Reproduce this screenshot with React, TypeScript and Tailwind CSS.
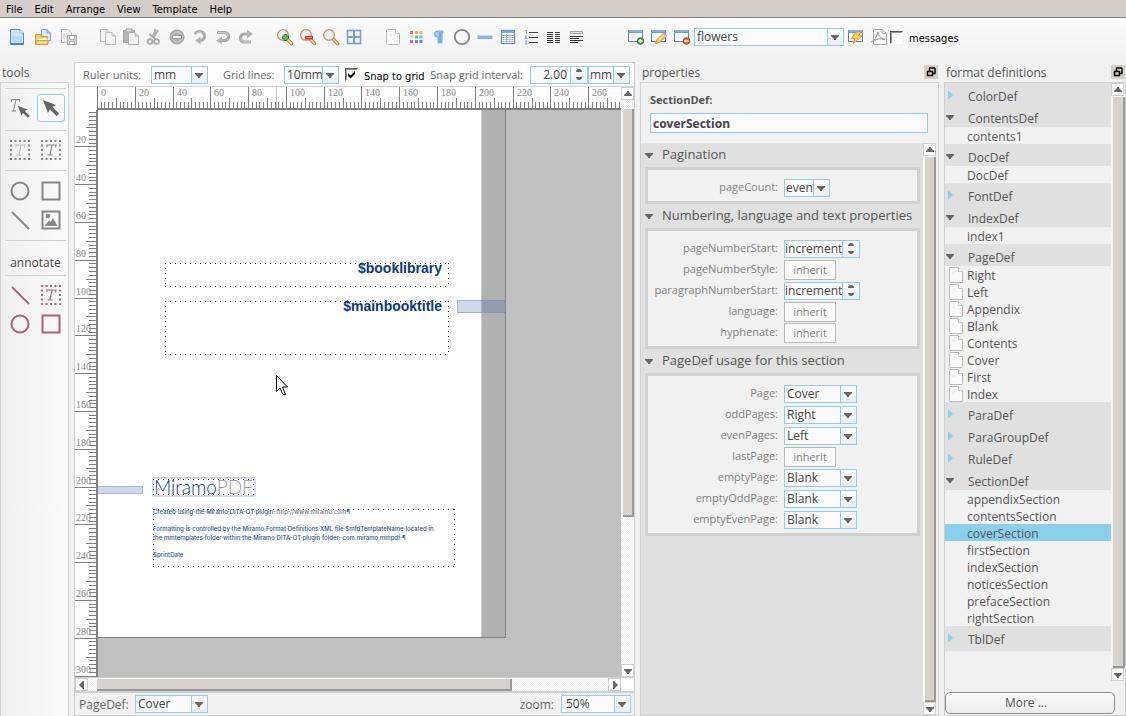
import React, { useId, useState } from "react";

const FONT = "font-['Open_Sans','Noto_Sans',sans-serif]";
const SYSTEM = "font-['DejaVu_Sans_Condensed','DejaVu_Sans',sans-serif]";
const DITHER =
  "bg-[repeating-conic-gradient(#ececec_0%_25%,#ffffff_0%_50%)] bg-[length:2px_2px]";

/* ---------- small shared drawings ---------- */

type TriProps = { dir: "up" | "down" | "left" | "right"; className?: string };

function Triangle({ dir, className = "text-[#666]" }: TriProps) {
  const paths = {
    down: "M0 2H8V3L5 6V7H3V6L0 3Z",
    up: "M0 6H8V5L5 2V1H3V2L0 5Z",
    right: "M2 0H3L7 4L3 8H2Z",
    left: "M6 0H5L1 4L5 8H6Z",
  };
  return (
    <svg width="8" height="8" viewBox="0 0 8 8" className={className} aria-hidden="true">
      <path d={paths[dir]} fill="currentColor" />
    </svg>
  );
}

function Icon({ children, size = 18 }: { children: React.ReactNode; size?: number }) {
  return (
    <svg width={size} height={size} viewBox={`0 0 ${size} ${size}`} fill="none" aria-hidden="true">
      {children}
    </svg>
  );
}

function Sheet({ x = 0, y = 0, stroke = "#b8b8b8" }: { x?: number; y?: number; stroke?: string }) {
  return (
    <g transform={`translate(${x} ${y})`}>
      <path d="M.5.5H7L10.5 4V12.5H.5Z" fill="#f4f4f4" stroke={stroke} />
      <path d="M7 .5V4H10.5" stroke={stroke} />
    </g>
  );
}

function PageIcon() {
  return (
    <svg width="14" height="16" viewBox="0 0 14 16" fill="none" aria-hidden="true">
      <path d="M1.5.5H9.5L13.5 4.5V14.5Q13.5 15.5 12.5 15.5H1.5Q.5 15.5 .5 14.5V1.5Q.5.5 1.5.5Z" fill="#fafafa" stroke="#b8b8b8" />
      <path d="M9.5.5V4.5H13.5" fill="#fff" stroke="#c8c8c8" />
      <path d="M3 5H6V8H3Z" fill="#f0f0f0" />
    </svg>
  );
}

function BrowserFrame() {
  return (
    <g>
      <rect x="1.5" y="2.5" width="14" height="11" fill="#f5f8fc" stroke="#5b80b5" />
      <path d="M1 2H16V5H1Z" fill="#6f9ddb" />
      <path d="M2 3H15" stroke="#9cc0ee" />
    </g>
  );
}

function Lens() {
  return (
    <g>
      <path d="M10.5 10.5L15.5 15.5" stroke="#b98145" strokeWidth="3.6" strokeLinecap="round" />
      <path d="M11.5 11.5L15.3 15.3" stroke="#f0c98e" strokeWidth="1.8" strokeLinecap="round" />
      <circle cx="7" cy="7" r="5.4" fill="#eeedf4" stroke="#c69a66" strokeWidth="1.4" />
    </g>
  );
}

const icons: Record<string, React.ReactNode> = {
  "New document": (
    <Icon>
      <path d="M2.5 1.5H12L15.5 5V16.5H2.5Z" fill="#cfe4fb" stroke="#4a8ad8" />
      <path d="M12 1.5V5H15.5" fill="#fff" stroke="#7fb0ea" />
      <path d="M4 9H14M4 11H14M4 13H14" stroke="#a8cdf5" />
      <path d="M3 16H15" stroke="#3f83d6" strokeWidth="2" />
    </Icon>
  ),
  Open: (
    <Icon>
      <path d="M7.5 1.5H13L16.5 5V12.5H7.5Z" fill="#d8e9fc" stroke="#6a9fe0" />
      <path d="M13 1.5V5H16.5" stroke="#6a9fe0" />
      <path d="M1.5 16.5V6.5H6.5L7.5 8.5H13.5V16.5Z" fill="#f6c65a" stroke="#d99a2b" />
      <path d="M3.5 10.5H13.5V14H3.5Z" fill="#fff" />
      <path d="M1.5 16.5L3 12.5H14.5L13.5 16.5Z" fill="#fbd878" stroke="#d99a2b" />
    </Icon>
  ),
  "Save copy": (
    <Icon>
      <path d="M1.5 1.5H8L11.5 5V14.5H1.5Z" fill="#f4f4f4" stroke="#b4b4b4" />
      <path d="M3 6H8M3 8H7M3 10H7" stroke="#cfcfcf" />
      <rect x="7.5" y="7.5" width="9" height="9" fill="#dadada" stroke="#a8a8a8" />
      <path d="M9.5 8V11.5H14.5V8M9.5 16V13.5H14.5V16" fill="#fff" stroke="#a8a8a8" />
    </Icon>
  ),
  Copy: (
    <Icon>
      <Sheet x={1} y={1} />
      <Sheet x={6} y={4} />
    </Icon>
  ),
  Paste: (
    <Icon>
      <path d="M1.5 2.5H12.5V14.5H1.5Z" fill="#b5b5b5" stroke="#a5a5a5" />
      <path d="M4 1H10V4H4Z" fill="#dedede" stroke="#a5a5a5" />
      <Sheet x={6} y={4} stroke="#acacac" />
    </Icon>
  ),
  Cut: (
    <Icon>
      <path d="M10.5 1L7.5 10M4.5 6L10 11M13 2L9 9" stroke="#b0b0b0" strokeWidth="2" />
      <circle cx="5" cy="13.5" r="2.4" stroke="#a8a8a8" strokeWidth="1.8" />
      <circle cx="11.5" cy="13.5" r="2.4" stroke="#a8a8a8" strokeWidth="1.8" />
    </Icon>
  ),
  Delete: (
    <Icon>
      <circle cx="9" cy="9" r="7" fill="#b2b2b2" stroke="#a0a0a0" />
      <circle cx="9" cy="9" r="5" stroke="#cfcfcf" />
      <rect x="4.5" y="7.5" width="9" height="3" fill="#f8f8f8" stroke="#9a9a9a" />
    </Icon>
  ),
  Refresh: (
    <Icon>
      <path d="M4 6Q6 3 9.5 3.5Q14 4.5 13.5 9Q12.5 13 8 12.5" stroke="#aaa" strokeWidth="3" />
      <path d="M9.5 8.5V16.5L4 12.5Z" fill="#b4b4b4" />
      <path d="M5 5.5Q8 3 11 5" stroke="#d4d4d4" />
    </Icon>
  ),
  Undo: (
    <Icon>
      <path d="M3 4.5H11Q14.5 5 14.5 8.5Q14.5 12 11 12.5H7" stroke="#aaa" strokeWidth="3" />
      <path d="M8 8.5V16.5L2 12.5Z" fill="#b4b4b4" />
      <path d="M4 4.5H11Q14 5 14 8" stroke="#d0d0d0" />
    </Icon>
  ),
  Redo: (
    <Icon>
      <path d="M14 14H7Q3.5 13.5 3.5 10Q3.5 6.5 7 6H10" stroke="#aaa" strokeWidth="3" />
      <path d="M10 1.5V10.5L16 6Z" fill="#b4b4b4" />
      <path d="M13 14H7Q4 13.5 4 10.5" stroke="#d0d0d0" />
    </Icon>
  ),
  "Zoom in": (
    <Icon>
      <Lens />
      <path d="M9.5 6V13M6 9.5H13" stroke="#2f8a3a" strokeWidth="3.4" />
      <path d="M9.5 7V12M7 9.5H12" stroke="#6cc474" strokeWidth="1.4" />
    </Icon>
  ),
  "Zoom out": (
    <Icon>
      <Lens />
      <rect x="6" y="8" width="8" height="3.4" fill="#dd2b2b" />
      <path d="M7 9.5H13" stroke="#f58a8a" />
    </Icon>
  ),
  "Zoom to fit": (
    <Icon>
      <Lens />
    </Icon>
  ),
  "Toggle grid": (
    <Icon>
      <rect x="2.5" y="2.5" width="13" height="13" fill="#eef3fb" stroke="#7d9ccf" strokeWidth="1.6" />
      <path d="M9 2V16M2 9H16" stroke="#7d9ccf" strokeWidth="2" />
    </Icon>
  ),
  "Page format": <PageIcon />,
  Colors: (
    <Icon>
      <path d="M3 3H6V6H3Z" fill="#f0706a" />
      <path d="M8 3H11V6H8Z" fill="#f4a460" />
      <path d="M12.5 3H15.5V6H12.5Z" fill="#e3c34e" />
      <path d="M3 7.5H6V10.5H3Z" fill="#c9e2a4" />
      <path d="M8 7.5H11V10.5H8Z" fill="#59c878" />
      <path d="M12.5 7.5H15.5V10.5H12.5Z" fill="#5fc0ec" />
      <path d="M3 12H6V15H3Z" fill="#c45ec9" />
      <path d="M8 12H11V15H8Z" fill="#8a78e0" />
      <path d="M12.5 12H15.5V15H12.5Z" fill="#4f86e0" />
    </Icon>
  ),
  Paragraph: (
    <Icon>
      <path d="M8 9.5Q4.5 9 4.5 6Q4.5 3 8 3H13V4.5H12V15H10.5V4.5H9.5V15H8Z" fill="#9cc6f6" stroke="#6fa6ea" />
    </Icon>
  ),
  Ellipse: (
    <Icon>
      <circle cx="9" cy="9" r="7.2" stroke="#868686" strokeWidth="1.8" />
    </Icon>
  ),
  Rule: (
    <Icon>
      <rect x="2" y="8" width="14" height="2.5" fill="#8fb8ee" stroke="#6a9fe0" strokeWidth=".7" />
    </Icon>
  ),
  Table: (
    <Icon>
      <rect x="2.5" y="2.5" width="13" height="13" fill="#fff" stroke="#5f90cf" strokeWidth="1.2" />
      <path d="M3 3H15V5H3Z" fill="#7fa9e0" />
      <path d="M4 7.5H14" stroke="#8cc58c" />
      <path d="M4 9.5H14M4 11.5H14M4 13.5H14M7.5 6.5V14.5M11 6.5V14.5" stroke="#a9c2e2" />
    </Icon>
  ),
  "Numbered list": (
    <Icon>
      <path d="M7 4.5H16M7 9.5H16M7 14.5H16" stroke="#444" />
      <path d="M3 2.5H4.5V6M3 8H5L3 10.5H5.5M3 13H5L4 14.5L5 16H3" stroke="#7fa5dc" />
    </Icon>
  ),
  "Two columns": (
    <Icon>
      <path d="M2 4.5H8M2 6.5H8M2 8.5H8M2 10.5H8M2 12.5H8M2 14.5H8M10 4.5H15M10 6.5H15M10 8.5H15M10 10.5H15M10 12.5H15M10 14.5H15" stroke="#333" />
    </Icon>
  ),
  "Text lines": (
    <Icon>
      <rect x="2.5" y="3.5" width="12" height="2" fill="#ddd" stroke="#aaa" />
      <path d="M2 8.5H15M2 10.5H11M2 12.5H15M2 14.5H10" stroke="#333" />
    </Icon>
  ),
  "Add definition": (
    <Icon>
      <BrowserFrame />
      <circle cx="13.5" cy="13" r="3.3" fill="#5da53c" stroke="#357a1c" />
      <path d="M13.5 11V15M11.5 13H15.5" stroke="#fff" strokeWidth="1.4" />
    </Icon>
  ),
  "Edit definition": (
    <Icon>
      <BrowserFrame />
      <path d="M5.5 15.5L7 11.5L13.5 5L16.5 8L9.5 14.5Z" fill="#f6c95c" stroke="#cf8f2a" />
      <path d="M13.5 5L16.5 8L15 9.5L12 6.5Z" fill="#f3b09a" />
      <path d="M8 12.5L14 7" stroke="#fdeab0" />
    </Icon>
  ),
  "Remove definition": (
    <Icon>
      <BrowserFrame />
      <circle cx="13.5" cy="13" r="3.3" fill="#e2662a" stroke="#b8400f" />
      <path d="M11.5 13H15.5" stroke="#fff" strokeWidth="1.6" />
    </Icon>
  ),
  "Run definition": (
    <Icon>
      <BrowserFrame />
      <path d="M9 4H14L11.5 8H15L6 15.5L8 10.5H4.5Z" fill="#f8cf57" stroke="#d99b2b" />
    </Icon>
  ),
  "Create PDF": (
    <Icon>
      <path d="M3.5 1.5H12L16.5 5.5V16.5H3.5Z" fill="#f8f8f8" stroke="#a5a5a5" />
      <path d="M12 1.5V5.5H16.5" stroke="#b5b5b5" />
      <path d="M1 14Q6 12 7.5 5Q8 3 8.5 5Q9 10 15 11.5Q9 9.5 3.5 12.5" stroke="#999" />
    </Icon>
  ),
};

function ToolButton({ name, wide = false }: { name: string; wide?: boolean }) {
  return (
    <button type="button" aria-label={name} className={`flex h-6 shrink-0 items-center justify-center ${wide ? "w-[26px]" : "w-[23px]"}`}>
      {icons[name]}
    </button>
  );
}

/* ---------- form controls ---------- */

type ComboProps = { label: string; id?: string; value: string; width: string; pad?: string; options?: string[] };

function Combo({ label, id, value, width, pad = "pl-[2px]", options = [] }: ComboProps) {
  return (
    <span className={`flex h-[18px] shrink-0 border border-[#8bd0ea] bg-[#fafafa] ${width}`}>
      <select id={id} aria-label={label} defaultValue={value} className={`min-w-0 flex-1 appearance-none bg-transparent text-xs leading-4 text-[#444] outline-none ${pad}`}>
        {[value, ...options].map((o) => (
          <option key={o}>{o}</option>
        ))}
      </select>
      <span className="pointer-events-none flex w-4 shrink-0 items-center justify-center border-l border-[#8bd0ea] bg-gradient-to-b from-white to-[#ececec] pr-px">
        <Triangle dir="down" />
      </span>
    </span>
  );
}

type SpinProps = { label: string; id?: string; value: string; width: string; align?: string };

function Spin({ label, id, value, width, align = "text-left" }: SpinProps) {
  return (
    <span className={`flex h-[18px] shrink-0 border border-[#8bd0ea] bg-[#fafafa] ${width}`}>
      <input id={id} aria-label={label} defaultValue={value} className={`min-w-0 flex-1 border-r border-[#8bd0ea] bg-transparent text-xs leading-4 text-[#444] outline-none ${align}`} />
      <span className="flex w-4 shrink-0 items-center justify-center bg-gradient-to-b from-white to-[#ececec]">
        <svg width="6" height="13" viewBox="0 0 6 13" aria-hidden="true">
          <path d="M0 4V3L2 1H4L6 3V4ZM0 9V10L2 12H4L6 10V9Z" fill="#666" />
        </svg>
      </span>
    </span>
  );
}

function TickBox({ label, checked }: { label: string; checked: boolean }) {
  const [on, setOn] = useState(checked);
  return (
    <label className={`flex items-center gap-[6px] text-[11px] leading-4 text-black ${SYSTEM}`}>
      <span className="grid size-[13px] shrink-0 place-items-center border border-b-white border-l-[#555] border-r-white border-t-[#555] bg-white shadow-[inset_1px_1px_0_#999]">
        <input type="checkbox" checked={on} onChange={() => setOn(!on)} className="col-start-1 row-start-1 size-[11px] appearance-none" />
        {on && (
          <svg width="9" height="9" viewBox="0 0 9 9" className="pointer-events-none col-start-1 row-start-1" aria-hidden="true">
            <path d="M1 3L3.5 5.5L8 1V4L3.5 8.5L1 6Z" fill="#000" />
          </svg>
        )}
      </span>
      <span className="pt-1">{label}</span>
    </label>
  );
}

function ScrollButton({ dir }: { dir: TriProps["dir"] }) {
  return (
    <button type="button" aria-label={`Scroll ${dir}`} className="flex size-[13px] shrink-0 items-center justify-center border border-[#cfcfcf] bg-white">
      <Triangle dir={dir} />
    </button>
  );
}

/* ---------- top bars ---------- */

function MenuBar() {
  return (
    <nav className={`flex h-[18px] shrink-0 items-center border-b border-[#808080] bg-[#d4cec8] pt-[2px] text-[11px] leading-4 text-black ${SYSTEM}`}>
      {["File", "Edit", "Arrange", "View", "Template", "Help"].map((m) => (
        <button key={m} type="button" className="px-[6px]">
          {m}
        </button>
      ))}
    </nav>
  );
}

function Toolbar() {
  return (
    <div className="flex h-11 shrink-0 items-center bg-gradient-to-b from-[#fcfcfc] to-[#f0f0f0] pb-[6px] pl-1" role="toolbar">
      <div className="flex">
        {["New document", "Open", "Save copy"].map((n) => (
          <ToolButton key={n} name={n} wide />
        ))}
      </div>
      <div className="ml-[14px] flex">
        {["Copy", "Paste", "Cut", "Delete", "Refresh", "Undo", "Redo"].map((n) => (
          <ToolButton key={n} name={n} />
        ))}
      </div>
      <div className="ml-4 flex">
        {["Zoom in", "Zoom out", "Zoom to fit", "Toggle grid"].map((n) => (
          <ToolButton key={n} name={n} />
        ))}
      </div>
      <div className="ml-4 flex">
        {["Page format", "Colors", "Paragraph", "Ellipse", "Rule", "Table", "Numbered list", "Two columns", "Text lines"].map((n) => (
          <ToolButton key={n} name={n} />
        ))}
      </div>
      <div className="ml-9 flex items-center">
        {["Add definition", "Edit definition", "Remove definition"].map((n) => (
          <ToolButton key={n} name={n} />
        ))}
        <span className="ml-px flex">
          <Combo label="Template name" value="flowers" width="w-[150px]" />
        </span>
        <ToolButton name="Run definition" />
        <ToolButton name="Create PDF" />
        <TickBox label="messages" checked={false} />
      </div>
    </div>
  );
}

/* ---------- tools panel ---------- */

const GREY = "#868686";
const ROSE = "#a8637a";

function FrameT({ color, letter }: { color: string; letter: string }) {
  return (
    <Icon size={20}>
      <path d="M0 1H20M0 19H20" stroke={color} strokeWidth="2" strokeDasharray="2 2.5" />
      <path d="M1 4.5V18M19 4.5V18" stroke={color} strokeWidth="2" strokeDasharray="2 2.5" />
      <path d="M6 7V5H15L14.5 7.5M11 5L9 15M6.5 15H11.5" stroke={letter} strokeWidth="1.2" />
    </Icon>
  );
}

function Arrow() {
  return <path d="M1 1L14 6L10.5 8L17 14.5L14.5 17L8 10.5L6 14Z" fill="#666" />;
}

function Tool({ name, active = false, children }: { name: string; active?: boolean; children: React.ReactNode }) {
  return (
    <button type="button" aria-label={name} aria-pressed={active} className={`flex size-[28px] items-center justify-center rounded-[3px] border ${active ? "border-[#8bd0ea] bg-[#f8f8f8]" : "border-transparent"}`}>
      {children}
    </button>
  );
}

function ToolsPanel() {
  const pair = "flex gap-[3px] px-[1px]";
  const line = (c: string) => (
    <Icon size={20}>
      <path d="M2 2L19 19" stroke={c} strokeWidth="2" />
    </Icon>
  );
  const circle = (c: string) => (
    <Icon size={20}>
      <circle cx="10" cy="10" r="8.5" stroke={c} strokeWidth="2" />
    </Icon>
  );
  const square = (c: string) => (
    <Icon size={20}>
      <rect x="1.5" y="1.5" width="17" height="17" stroke={c} strokeWidth="2" />
    </Icon>
  );
  return (
    <aside className="flex w-[69px] shrink-0 flex-col">
      <h2 className="h-5 pl-[2px] text-xs leading-[22px] text-[#555]">tools</h2>
      <div className="flex flex-1 flex-col border border-b-0 border-[#cfcfcf] bg-gradient-to-r from-[#f0f0f0] to-[#fafafa] pl-1 pr-[2px] pt-[5px]">
        <div className="border-t border-[#cfcfcf] pb-[8px] pt-[5px]">
          <div className={pair}>
            <Tool name="Text select">
              <Icon size={20}>
                <path d="M1.5 4V1.5H10L9.5 4M6 1.5L3.5 13M1.5 13H6" stroke="#868686" />
                <g transform="translate(7 7) scale(.75)">
                  <Arrow />
                </g>
              </Icon>
            </Tool>
            <Tool name="Select" active>
              <Icon>
                <Arrow />
              </Icon>
            </Tool>
          </div>
        </div>
        <div className="border-t border-[#cfcfcf] pb-[6px] pt-[5px]">
          <div className={pair}>
            <Tool name="Flow frame">
              <FrameT color={GREY} letter="#c4c4c4" />
            </Tool>
            <Tool name="Text frame">
              <FrameT color={GREY} letter={GREY} />
            </Tool>
          </div>
        </div>
        <div className="border-t border-[#cfcfcf] py-[6px]">
          <div className={pair}>
            <Tool name="Draw ellipse">{circle(GREY)}</Tool>
            <Tool name="Draw rectangle">{square(GREY)}</Tool>
          </div>
          <div className={`mt-px ${pair}`}>
            <Tool name="Draw line">{line(GREY)}</Tool>
            <Tool name="Place image">
              <Icon size={20}>
                <rect x="1.5" y="1.5" width="17" height="17" stroke={GREY} strokeWidth="2" />
                <circle cx="7" cy="6" r="2.3" fill={GREY} />
                <path d="M3.5 16L8 10.5L9.5 12L12 8L16.5 16Z" fill={GREY} />
              </Icon>
            </Tool>
          </div>
        </div>
        <div className="border-t border-[#cfcfcf] pb-[3px] pt-[13px] text-center text-xs leading-[18px] text-[#444]">annotate</div>
        <div className="border-t border-[#cfcfcf] py-[5px]">
          <div className={pair}>
            <Tool name="Annotate line">{line(ROSE)}</Tool>
            <Tool name="Annotate text">
              <FrameT color={ROSE} letter={ROSE} />
            </Tool>
          </div>
          <div className={`mt-px ${pair}`}>
            <Tool name="Annotate ellipse">{circle(ROSE)}</Tool>
            <Tool name="Annotate rectangle">{square(ROSE)}</Tool>
          </div>
        </div>
      </div>
    </aside>
  );
}

/* ---------- rulers and canvas ---------- */

const STEP = 3.78;
const rulerText = "fill-[#888] font-['Liberation_Serif',serif] text-[10px]";

function HorizontalRuler() {
  const ticks = Array.from({ length: 145 }, (_, i) => i);
  return (
    <svg className="h-[23px] w-full bg-white" aria-hidden="true">
      {ticks.map((i) => {
        const x = Math.floor(22.4 + i * STEP);
        const top = i % 10 === 0 ? 0 : i % 5 === 0 ? 11 : 15;
        return <rect key={i} x={x} y={top} width="1" height={22 - top} fill="#808080" />;
      })}
      <rect x="201" y="0" width="1" height="21" fill="#c4c4c4" />
      {ticks
        .filter((i) => i % 10 === 0 && i <= 130)
        .map((i) => (
          <text key={i} x={Math.floor(22.4 + i * STEP) + 4} y="9" className={rulerText}>
            {i * 2}
          </text>
        ))}
      <rect x="22" y="21" width="100%" height="2" fill="#808080" />
    </svg>
  );
}

function VerticalRuler() {
  const ticks = Array.from({ length: 150 }, (_, i) => i + 1);
  return (
    <svg className="h-full w-[23px] shrink-0 bg-white" aria-hidden="true">
      {ticks.map((i) => {
        const y = Math.floor(i * STEP) - 1;
        const left = i % 10 === 0 ? 0 : i % 5 === 0 ? 11 : 14;
        return <rect key={i} x={left} y={y} width={22 - left} height="1" fill="#808080" />;
      })}
      {ticks
        .filter((i) => i % 10 === 0)
        .map((i) => (
          <text key={i} x="1" y={Math.floor(i * STEP) - 4} className={rulerText}>
            {i * 2}
          </text>
        ))}
      <rect x="21" y="0" width="2" height="100%" fill="#808080" />
    </svg>
  );
}

function DottedFrame({ className }: { className: string }) {
  return (
    <svg className={`absolute ${className}`} aria-hidden="true">
      <path d="M0 .5H2000" stroke="#000" strokeDasharray="1 4" />
      <path d="M.5 0V2000" stroke="#000" strokeDasharray="1 4" />
      <g transform="translate(0 -1)">
        <svg y="100%" overflow="visible">
          <path d="M0 .5H2000" stroke="#000" strokeDasharray="1 4" />
        </svg>
      </g>
      <g transform="translate(-1 0)">
        <svg x="100%" overflow="visible">
          <path d="M.5 0V2000" stroke="#000" strokeDasharray="1 4" />
        </svg>
      </g>
    </svg>
  );
}

function Canvas() {
  return (
    <div className="relative min-w-0 flex-1 overflow-hidden bg-[#c0c0c0]">
      <div className="absolute left-0 top-0 h-[528px] w-[408px] border-b border-r border-[#808080] bg-white">
        <div className="absolute right-0 top-0 h-full w-[24px] border-l border-[#ccc] bg-[#b1b1b1]" />

        <DottedFrame className="left-[67px] top-[153px] h-[24px] w-[284px]" />
        <div className="absolute right-[63px] top-[149px] font-['Liberation_Sans',sans-serif] text-[14px] font-bold leading-[18px] text-[#0a3a82]">$booklibrary</div>

        <DottedFrame className="left-[67px] top-[191px] h-[54px] w-[284px]" />
        <div className="absolute right-[63px] top-[187px] font-['Liberation_Sans',sans-serif] text-[14px] font-bold leading-[18px] text-[#0a3a82]">$mainbooktitle</div>

        <div className="absolute left-[359px] top-[190px] h-[13px] w-[48px] border border-r-0 border-[#6f8fc0]/50 bg-[#3c62a4]/25" />
        <div className="absolute left-0 top-[376px] h-[8px] w-[45px] border border-l-0 border-[#6f8fc0]/40 bg-[#3c62a4]/25" />

        <div className="absolute left-[54px] top-[367px] h-[20px] w-[104px] rounded-[2px] border-2 border-[#d5d8e2] bg-white font-['Lato',sans-serif] text-[19px] font-light leading-4">
          <span className="text-[#0a3a82]">Miramo</span>
          <span className="text-[#999]">PDF</span>
        </div>
        <DottedFrame className="left-[55px] top-[369px] h-[16px] w-[101px]" />

        <DottedFrame className="left-[55px] top-[399px] h-[58px] w-[302px]" />
        <div className="absolute left-[55px] top-[397px] whitespace-nowrap font-['Inter','Liberation_Sans',sans-serif] text-[6px] font-medium leading-[9px] text-[#2a5596]">
          <p>
            Created·using·the·Miramo·DITA-OT·plugin:·<span className="text-[#777]">http://www.miramo.com</span>¶
          </p>
          <p className="mt-2">
            Formatting·is·controlled·by·the·Miramo·Format·Definitions·XML·file·$mfdTemplateName·located·in
            <br />
            the·mmtemplates·folder·within·the·Miramo·DITA-OT·plugin·folder:·com.miramo.mmpdf·¶
          </p>
          <p className="mt-2">$printDate</p>
        </div>
      </div>

      <svg width="13" height="21" viewBox="0 0 13 21" className="absolute left-[178px] top-[265px]" aria-hidden="true">
        <path d="M.5.5V16.5L4 13L7 19.5H9.5L6.5 12H11.5Z" fill="#fff" stroke="#000" />
      </svg>
    </div>
  );
}

function Editor() {
  const label = "shrink-0 pt-px text-[#666]";
  return (
    <main className="flex min-w-0 flex-1 flex-col border border-[#cfcfcf]">
      <div className="flex h-6 shrink-0 items-center border-b border-[#cfcfcf] bg-white pl-2 pr-1 text-[11px]">
        <label htmlFor="ruler-units" className={`w-[68px] ${label}`}>
          Ruler units:
        </label>
        <Combo id="ruler-units" label="Ruler units" value="mm" width="w-[57px]" options={["pt", "in"]} />
        <label htmlFor="grid-lines" className={`ml-[15px] w-[61px] ${label}`}>
          Grid lines:
        </label>
        <Combo id="grid-lines" label="Grid lines" value="10mm" width="w-[55px]" options={["5mm"]} />
        <span className="ml-[6px] shrink-0">
          <TickBox label="Snap to grid" checked />
        </span>
        <span className="flex-1" />
        <label htmlFor="snap-interval" className={`mr-[7px] ${label}`}>
          Snap grid interval:
        </label>
        <Spin id="snap-interval" label="Snap grid interval" value="2.00" width="w-[58px]" align="pr-[3px] text-right" />
        <Combo label="Snap grid unit" value="mm" width="w-[42px]" pad="pl-px" />
      </div>

      <div className="flex min-h-0 flex-1">
        <div className="flex min-w-0 flex-1 flex-col">
          <div className="flex shrink-0">
            <HorizontalRuler />
          </div>
          <div className="flex min-h-0 flex-1">
            <VerticalRuler />
            <Canvas />
          </div>
        </div>
        <div className={`flex w-[13px] shrink-0 flex-col ${DITHER}`}>
          <ScrollButton dir="up" />
          <div className="ml-[2px] mt-[9px] h-[408px] border-b-2 border-r-2 border-[#999] bg-[#d6d2cd]" />
          <div className="flex-1" />
          <ScrollButton dir="down" />
        </div>
      </div>

      <div className="flex h-[14px] shrink-0 border-t border-[#cfcfcf]">
        <div className={`flex min-w-0 flex-1 ${DITHER}`}>
          <ScrollButton dir="left" />
          <div className="ml-[9px] mt-px w-[415px] shrink border-b-2 border-r-2 border-[#999] bg-[#d6d2cd]" />
          <div className="flex-1" />
          <ScrollButton dir="right" />
        </div>
        <div className="w-[13px] shrink-0 bg-white" />
      </div>

      <div className="flex h-[24px] shrink-0 items-center border-t-2 border-[#cfcfcf] pl-1 pr-[3px] text-xs">
        <label htmlFor="page-def" className={`w-[56px] ${label}`}>
          PageDef:
        </label>
        <Combo id="page-def" label="PageDef" value="Cover" width="w-[73px]" />
        <span className="flex-1" />
        <label htmlFor="zoom" className={`mr-[7px] ${label}`}>
          zoom:
        </label>
        <Combo id="zoom" label="zoom" value="50%" width="w-[70px]" pad="pl-1" />
      </div>
    </main>
  );
}

/* ---------- docked panels ---------- */

function DockTitle({ children }: { children: string }) {
  return (
    <div className="flex h-5 shrink-0 items-center justify-between pl-[2px]">
      <h2 className="pt-[2px] text-xs text-[#555]">{children}</h2>
      <button type="button" aria-label={`Undock ${children}`} className="mb-px mr-px flex size-[14px] items-center justify-center bg-[#d4cec8]">
        <svg width="10" height="10" viewBox="0 0 10 10" fill="none" aria-hidden="true">
          <path d="M3 1H9M3.5 1V4M9 1V6.5M7 6.5H9.5" stroke="#000" strokeWidth="1.4" />
          <path d="M1 4.5H7M1.5 4V9M1 8.5H7M6.5 4V9" stroke="#000" strokeWidth="1.4" />
        </svg>
      </button>
    </div>
  );
}

type Field = { name: string; kind: "combo" | "spin" | "inherit"; value?: string; width?: string };

const sections: { title: string; fields: Field[] }[] = [
  { title: "Pagination", fields: [{ name: "pageCount", kind: "combo", value: "even", width: "w-[46px]" }] },
  {
    title: "Numbering, language and text properties",
    fields: [
      { name: "pageNumberStart", kind: "spin", value: "increment" },
      { name: "pageNumberStyle", kind: "inherit" },
      { name: "paragraphNumberStart", kind: "spin", value: "increment" },
      { name: "language", kind: "inherit" },
      { name: "hyphenate", kind: "inherit" },
    ],
  },
  {
    title: "PageDef usage for this section",
    fields: [
      { name: "Page", kind: "combo", value: "Cover", width: "w-[73px]" },
      { name: "oddPages", kind: "combo", value: "Right", width: "w-[73px]" },
      { name: "evenPages", kind: "combo", value: "Left", width: "w-[73px]" },
      { name: "lastPage", kind: "inherit" },
      { name: "emptyPage", kind: "combo", value: "Blank", width: "w-[73px]" },
      { name: "emptyOddPage", kind: "combo", value: "Blank", width: "w-[73px]" },
      { name: "emptyEvenPage", kind: "combo", value: "Blank", width: "w-[73px]" },
    ],
  },
];

function FieldRow({ field }: { field: Field }) {
  const id = useId();
  return (
    <div className="flex h-[21px] items-center gap-[6px]">
      <label htmlFor={id} className="w-[130px] shrink-0 text-right text-[11px] text-[#808080]">
        {field.name}:
      </label>
      {field.kind === "combo" && <Combo id={id} label={field.name} value={field.value ?? ""} width={field.width ?? ""} pad={field.width === "w-[46px]" ? "pl-px" : "pl-[2px]"} />}
      {field.kind === "spin" && <Spin id={id} label={field.name} value={field.value ?? ""} width="w-[76px]" />}
      {field.kind === "inherit" && (
        <button id={id} type="button" className="h-5 w-[52px] border border-[#b8b8b8] bg-[#fafafa] text-[11px] leading-4 text-[#808080]">
          inherit
        </button>
      )}
    </div>
  );
}

function PropertiesPanel() {
  return (
    <section className="flex w-[299px] shrink-0 flex-col">
      <DockTitle>properties</DockTitle>
      <div className="flex min-h-0 flex-1 flex-col border border-[#cfcfcf]">
        <div className="flex flex-col px-[9px] pb-[10px] pt-[8px]">
          <label htmlFor="section-def" className="h-[22px] text-[11px] font-bold leading-[18px] text-[#555]">
            SectionDef:
          </label>
          <input id="section-def" defaultValue="coverSection" className="mr-px h-[20px] border border-[#8bd0ea] bg-[#fafafa] px-[2px] text-xs font-bold text-[#444] outline-none" />
        </div>
        <div className="flex min-h-0 flex-1 bg-[#e0e0e0]">
          <div className="min-w-0 flex-1 pl-[4px] pr-[3px]">
            {sections.map((s) => (
              <div key={s.title}>
                <button type="button" aria-expanded="true" className="flex h-6 w-full items-center gap-[9px] text-left text-[13px] text-[#555]">
                  <Triangle dir="down" />
                  {s.title}
                </button>
                <div className="border-[3px] border-[#d0d0d0] bg-[#f1f1f1] pb-[3px] pt-[7px]">
                  {s.fields.map((f) => (
                    <FieldRow key={f.name} field={f} />
                  ))}
                </div>
              </div>
            ))}
          </div>
          <div className="flex w-[13px] shrink-0 flex-col bg-[#f6f6f6]">
            <ScrollButton dir="up" />
            <div className="ml-[2px] mt-px flex-1 border-b-2 border-r-2 border-[#999] bg-[#d6d2cd]" />
            <ScrollButton dir="down" />
          </div>
          <div className="w-[2px] shrink-0 bg-[#f1f1f1]" />
        </div>
      </div>
    </section>
  );
}

type Def = { name: string; open?: boolean; pages?: boolean; items?: string[] };

const defs: Def[] = [
  { name: "ColorDef" },
  { name: "ContentsDef", open: true, items: ["contents1"] },
  { name: "DocDef", open: true, items: ["DocDef"] },
  { name: "FontDef" },
  { name: "IndexDef", open: true, items: ["index1"] },
  { name: "PageDef", open: true, pages: true, items: ["Right", "Left", "Appendix", "Blank", "Contents", "Cover", "First", "Index"] },
  { name: "ParaDef" },
  { name: "ParaGroupDef" },
  { name: "RuleDef" },
  {
    name: "SectionDef",
    open: true,
    items: ["appendixSection", "contentsSection", "coverSection", "firstSection", "indexSection", "noticesSection", "prefaceSection", "rightSection"],
  },
  { name: "TblDef" },
];

function FormatPanel() {
  const [selected, setSelected] = useState("coverSection");
  return (
    <section className="flex w-[182px] shrink-0 flex-col">
      <DockTitle>format definitions</DockTitle>
      <div className="flex min-h-0 flex-1 flex-col border border-[#cfcfcf]">
        <div className="flex h-[598px] min-h-0 shrink">
          <ul className="min-w-0 flex-1">
            {defs.map((d) => (
              <li key={d.name}>
                <button type="button" aria-expanded={!!d.open} className="flex h-[22px] w-full items-center gap-[14px] bg-[#e0e0e0] pl-[1px] pt-[5px] text-left text-xs leading-4 text-[#555]">
                  <span className="mb-[4px] flex">
                    <Triangle dir={d.open ? "down" : "right"} className={d.open ? "text-[#666]" : "text-[#8bd0ea]"} />
                  </span>
                  {d.name}
                </button>
                {d.items?.map((it) => (
                  <button
                    key={it}
                    type="button"
                    onClick={() => setSelected(it)}
                    className={`flex h-[17px] w-full items-center pl-1 text-left text-xs text-[#555] ${selected === it ? "bg-[#8bd0ea]" : ""}`}
                  >
                    <span className="w-[18px] shrink-0">{d.pages && <PageIcon />}</span>
                    <span className="pt-[3px] leading-4">{it}</span>
                  </button>
                ))}
              </li>
            ))}
            <li className="h-[3px] bg-[#e0e0e0]" />
          </ul>
          <div className="flex w-[14px] shrink-0 flex-col bg-[#f6f6f6]">
            <ScrollButton dir="up" />
            <div className="ml-[2px] mt-px flex-1 border-b-2 border-r-2 border-[#999] bg-[#d6d2cd]" />
            <ScrollButton dir="down" />
          </div>
        </div>
        <button type="button" className="mb-[1px] mr-[10px] mt-auto h-[22px] rounded-[5px] border border-[#8c8c8c] bg-gradient-to-b from-[#fafafa] to-[#ececec] pr-2 text-xs leading-4 text-[#555]">
          More ...
        </button>
      </div>
    </section>
  );
}

export default function App() {
  return (
    <div className={`flex h-screen min-h-[700px] flex-col overflow-hidden bg-[#f1f1f1] ${FONT}`}>
      <MenuBar />
      <Toolbar />
      <div className="flex min-h-0 flex-1 gap-[5px]">
        <ToolsPanel />
        <Editor />
        <PropertiesPanel />
        <FormatPanel />
      </div>
    </div>
  );
}
